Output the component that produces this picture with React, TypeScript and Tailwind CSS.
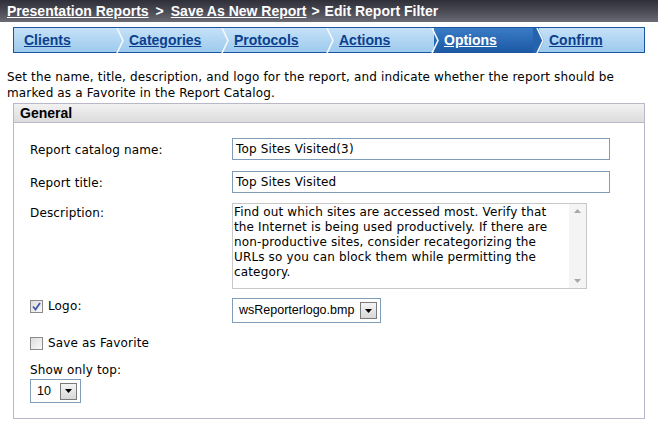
import React from "react";

const steps = ["Clients", "Categories", "Protocols", "Actions", "Options", "Confirm"];

function Chevron({ active }: { active?: boolean }) {
  return (
    <svg width="12" height="25" viewBox="0 0 12 25" className="absolute right-[-6px] top-0 z-10">
      {active && <polygon points="0,0 5,0 11,12.5 5,25 0,25" fill="#2563ad" />}
      <polyline points="4,0 10,12.5 4,25" fill="none" stroke="#f4f9ff" strokeWidth="1.6" />
    </svg>
  );
}

function DropArrow() {
  return (
    <span className="flex h-[17px] w-[17px] shrink-0 items-center justify-center border border-[#7a7a7a] bg-gradient-to-b from-[#f4f4f4] to-[#d8d8d8]">
      <svg width="7" height="4" viewBox="0 0 7 4">
        <polygon points="0,0 7,0 3.5,4" fill="#000" />
      </svg>
    </span>
  );
}

const bold = "font-['Liberation_Sans',Arial,sans-serif] text-[14px] font-bold tracking-normal";
const selectFont = "font-['Liberation_Sans',Arial,sans-serif] text-[12.5px] tracking-normal";

export default function App() {
  return (
    <div className="h-[422px] w-[658px] overflow-hidden bg-white font-['DejaVu_Sans',Verdana,sans-serif] text-[12px] tracking-[0.15px] text-black">
      <div className={"flex h-[22px] items-center bg-gradient-to-b from-[#2f2f39] via-[#4a4a55] to-[#6b6b76] pl-[7px] text-white " + bold}>
        <span className="underline">Presentation Reports</span>
        <span className="mx-[7px]">&gt;</span>
        <span className="underline">Save As New Report</span>
        <span className="mx-[5px]">&gt;</span>
        <span>Edit Report Filter</span>
      </div>

      <div className="ml-[13px] mt-[5px] flex h-[26px] w-[632px] border border-[#1c56a3] bg-gradient-to-b from-[#c5e1f7] to-[#9dcaee]">
        {steps.map((s, i) => {
          const active = s === "Options";
          return (
            <div
              key={s}
              className={
                "relative flex h-full w-[105px] items-center pl-[10px] underline " +
                bold +
                (active
                  ? " bg-gradient-to-b from-[#3a7cc6] to-[#1d59a5] text-white"
                  : " text-[#0b3f8e]")
              }
            >
              {s}
              {i < steps.length - 1 && <Chevron active={active} />}
            </div>
          );
        })}
      </div>

      <p className="ml-[7px] mt-[16px] w-[645px] leading-[16px]">
        Set the name, title, description, and logo for the report, and indicate whether the report should be marked as a Favorite in the Report Catalog.
      </p>

      <div className="ml-[13px] mt-[2px] h-[316px] w-[632px] border border-[#b8b8c8]">
        <div className={"flex h-[19px] items-center border-b border-[#b8b8c8] bg-gradient-to-b from-[#f2f2f2] to-[#dcdcdc] pl-[6px] " + bold}>
          General
        </div>

        <div className="pl-[16px] pt-[15px]">
          <div className="flex items-start">
            <span className="w-[202px] pt-[3px]">Report catalog name:</span>
            <div className="flex h-[22px] w-[378px] items-center border border-[#7f9db9] px-[3px]">Top Sites Visited(3)</div>
          </div>
          <div className="mt-[11px] flex items-start">
            <span className="w-[202px] pt-[3px]">Report title:</span>
            <div className="flex h-[22px] w-[378px] items-center border border-[#7f9db9] px-[3px]">Top Sites Visited</div>
          </div>
          <div className="mt-[10px] flex items-start">
            <span className="w-[202px] pt-[1px]">Description:</span>
            <div className="flex h-[86px] w-[355px] border border-[#c8c8c8]">
              <div className="flex-1 pl-[1px] pt-[1px] leading-[15px]">
                Find out which sites are accessed most. Verify that the Internet is being used productively. If there are non-productive sites, consider recategorizing the URLs so you can block them while permitting the category.
              </div>
              <div className="flex w-[17px] flex-col items-center justify-between bg-[#f4f4f4] py-[5px]">
                <svg width="7" height="4" viewBox="0 0 7 4"><polygon points="0,4 7,4 3.5,0" fill="#a8a8a8" /></svg>
                <svg width="7" height="4" viewBox="0 0 7 4"><polygon points="0,0 7,0 3.5,4" fill="#a8a8a8" /></svg>
              </div>
            </div>
          </div>

          <div className="mt-[9px] flex items-start">
            <div className="flex h-[16px] w-[202px] items-center">
              <span className="flex h-[13px] w-[13px] items-center justify-center border border-[#8a8a8a] bg-gradient-to-br from-[#dcdcdc] to-[#fafafa]">
                <svg width="9" height="9" viewBox="0 0 9 9">
                  <polyline points="1,4.5 3.5,7.5 8,1" fill="none" stroke="#3f58a8" strokeWidth="1.8" />
                </svg>
              </span>
              <span className="ml-[5px]">Logo:</span>
            </div>
            <div className={"flex h-[25px] w-[149px] items-center justify-between border border-[#7f9db9] pl-[6px] pr-[3px] " + selectFont}>
              <span>wsReporterlogo.bmp</span>
              <DropArrow />
            </div>
          </div>

          <div className="mt-[11px] flex items-center">
            <span className="h-[13px] w-[13px] border border-[#8a8a8a] bg-gradient-to-br from-[#dcdcdc] to-[#fafafa]" />
            <span className="ml-[5px]">Save as Favorite</span>
          </div>

          <div className="mt-[9px]">Show only top:</div>
          <div className={"flex h-[24px] w-[51px] items-center justify-between border border-[#7f9db9] pl-[6px] pr-[3px] " + selectFont}>
            <span>10</span>
            <DropArrow />
          </div>
        </div>
      </div>
    </div>
  );
}
